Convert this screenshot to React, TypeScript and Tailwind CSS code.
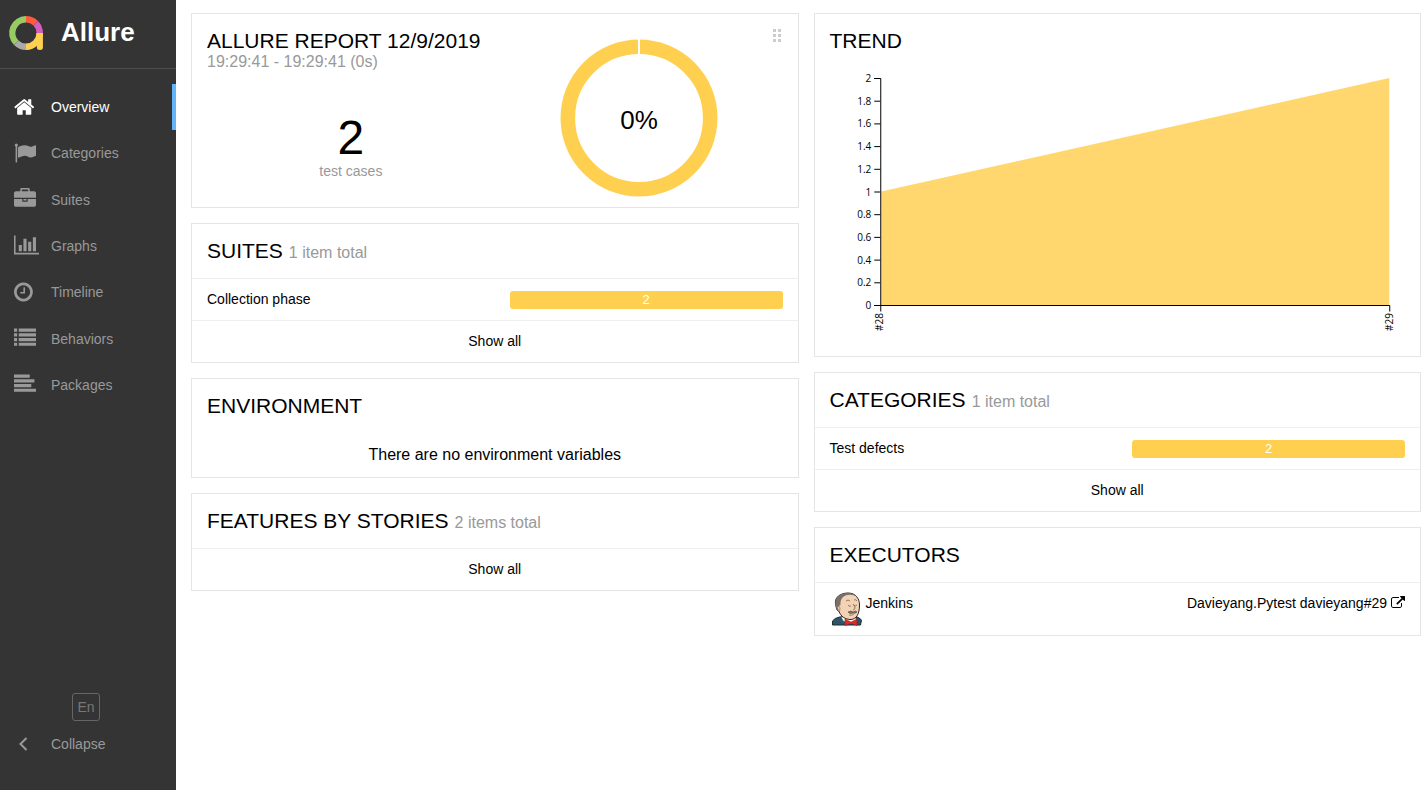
import { useState } from "react";
import type { ReactNode } from "react";

const navItems = [
    { label: "Overview", box: "64 0 1664 1792", icon: <path d="M1472 992v480q0 26-19 45t-45 19h-384v-384h-256v384h-384q-26 0-45-19t-19-45v-480q0-1 .5-3t.5-3l575-474 575 474q1 2 1 6zm223-69l-62 74q-8 9-21 11h-3q-13 0-21-7l-692-577-692 577q-12 8-24 7-13-2-21-11l-62-74q-8-10-7-23.5t11-21.5l719-599q32-26 76-26t76 26l244 204v-195q0-14 9-23t23-9h192q14 0 23 9t9 23v408l219 182q10 8 11 21.5t-7 23.5z" /> },
    { label: "Categories", box: "0 0 1792 1792", icon: <path d="M320 256q0 72-64 110v1266q0 13-9.5 22.5t-22.5 9.5h-64q-13 0-22.5-9.5t-9.5-22.5v-1266q-64-38-64-110 0-53 37.5-90.5t90.5-37.5 90.5 37.5 37.5 90.5zm1472 64v763q0 25-12.5 38.5t-39.5 27.5q-215 116-369 116-61 0-123.5-22t-108.5-48-115.5-48-142.5-22q-192 0-464 146-17 9-33 9-26 0-45-19t-19-45v-742q0-32 31-55 21-14 79-43 236-120 421-120 107 0 200 29t219 88q38 19 88 19 54 0 117.5-21t110-47 88-47 54.5-21q26 0 45 19t19 45z" /> },
    { label: "Suites", box: "0 0 1792 1792", icon: <path d="M640 256h512v-128h-512v128zm1152 640v480q0 66-47 113t-113 47h-1472q-66 0-113-47t-47-113v-480h672v160q0 26 19 45t45 19h320q26 0 45-19t19-45v-160h672zm-768 0v128h-256v-128h256zm768-480v384h-1792v-384q0-66 47-113t113-47h352v-160q0-40 28-68t68-28h576q40 0 68 28t28 68v160h352q66 0 113 47t47 113z" /> },
    { label: "Graphs", box: "0 0 2048 1792", icon: <path d="M640 896v512h-256v-512h256zm384-512v1024h-256v-1024h256zm1024 1152v128h-2048v-1536h128v1408h1920zm-640-896v768h-256v-768h256zm384-384v1152h-256v-1152h256z" /> },
    { label: "Timeline", box: "128 0 1536 1792", icon: <path d="M1024 544v448q0 14-9 23t-23 9h-320q-14 0-23-9t-9-23v-64q0-14 9-23t23-9h224v-352q0-14 9-23t23-9h64q14 0 23 9t9 23zm416 352q0-148-73-273t-198-198-273-73-273 73-198 198-73 273 73 273 198 198 273 73 273-73 198-198 73-273zm224 0q0 209-103 385.5t-279.5 279.5-385.5 103-385.5-103-279.5-279.5-103-385.5 103-385.5 279.5-279.5 385.5-103 385.5 103 279.5 279.5 103 385.5z" /> },
    { label: "Behaviors", box: "0 0 1792 1792", icon: <path d="M0 128h256v256H0zM384 128h1408v256H384zM0 512h256v256H0zM384 512h1408v256H384zM0 896h256v256H0zM384 896h1408v256H384zM0 1280h256v256H0zM384 1280h1408v256H384z" /> },
    { label: "Packages", box: "0 0 1792 1792", icon: <path d="M0 128h1280v256H0zM0 512h1664v256H0zM0 896h1408v256H0zM0 1280h1792v256H0z" /> },
];

const ticks = ["0", "0.2", "0.4", "0.6", "0.8", "1", "1.2", "1.4", "1.6", "1.8", "2"];

function Logo() {
    return (
        <svg className="h-9 w-9" viewBox="0 0 36 36" fill="none" strokeWidth="6.4">
            <path d="M8.300 27.700A13.700 13.700 0 0 1 18 4.300" stroke="#97cc64" />
            <path d="M18 4.300A13.700 13.700 0 0 1 27.700 8.300" stroke="#fd5a3e" />
            <path d="M27.700 8.300A13.700 13.700 0 0 1 31.700 18" stroke="#d35ebe" />
            <path d="M18 31.700A13.700 13.700 0 0 1 8.300 27.700" stroke="#aaa" />
            <path d="M31.700 18A13.700 13.700 0 0 1 18 31.700" stroke="#ffd050" />
            <path d="M28.500 18H34.900V32.500q0 2.500-3 2.500t-3-2.500V24z" fill="#ffd050" />
        </svg>
    );
}

function Widget({ children }: { children: ReactNode }) {
    return <section className="border border-[#e5e5e5] bg-white">{children}</section>;
}

function Title({ children, note }: { children: ReactNode; note?: string }) {
    return (
        <h2 className="flex items-baseline gap-1.5 p-[15px] text-[21px] leading-6">
            {children}
            {note && <span className="text-base leading-4 text-[#999]">{note}</span>}
        </h2>
    );
}

function BarRow({ name, count }: { name: string; count: number }) {
    return (
        <a href="#" className="flex items-center border-t border-[#eceff1] px-[15px] py-[10px] text-sm leading-[21px]">
            <span className="flex-1">{name}</span>
            <span className="w-[273px] rounded-[3px] bg-[#ffd050] text-center text-[13px] leading-[18px] text-white">{count}</span>
        </a>
    );
}

function ShowAll() {
    return (
        <a href="#" className="block border-t border-[#eceff1] py-[10px] text-center text-sm leading-[21px]">
            Show all
        </a>
    );
}

function Donut() {
    return (
        <svg className="h-40 w-40" viewBox="0 0 160 160">
            <circle cx="80" cy="80" r="71.2" fill="none" stroke="#ffd050" strokeWidth="14.6" />
            <path d="M80 0v18" stroke="#fff" strokeWidth="2" />
            <text x="80" y="91" textAnchor="middle" fontSize="26">0%</text>
        </svg>
    );
}

function TrendChart() {
    return (
        <svg className="block h-[288px] w-full" viewBox="0 0 605 288" fontSize="10" style={{ fontFamily: '"Open Sans", sans-serif' }}>
            <path d="M66 123.500L574 10V238H66z" fill="#ffd76e" />
            <path d="M59 10.500h6.500V238M59 237.500h515.500v6M65.500 237.500v6" fill="none" stroke="#000" />
            {ticks.map((t, i) => (
                <g key={t}>
                    <path d={`M59 ${237.5 - i * 22.7}h6`} stroke="#000" />
                    <text x="56" y={241 - i * 22.7} textAnchor="end">{t}</text>
                </g>
            ))}
            <text transform="translate(68 245) rotate(-90)" textAnchor="end">#28</text>
            <text transform="translate(578 245) rotate(-90)" textAnchor="end">#29</text>
        </svg>
    );
}

function JenkinsIcon() {
    return (
        <svg className="h-[34px] w-[30px]" viewBox="0 0 30 34">
            <path d="M.5 33V29q2-3 7-4l14-1q6 1 8 4l-1 5z" fill="#2d5468" stroke="#1d2b33" />
            <path d="M9 25l2 4 7 3 7-3-2-5z" fill="#fff" stroke="#444" strokeWidth=".6" />
            <path d="M4 14C1 5 9 1 16 1c8 0 11.500 6 11.500 12 0 9-3 14-8.500 14.500-6 0-10-3-12-8q-3-1-3-5.500z" fill="#f3d3b4" stroke="#30231c" />
            <path d="M4 16C1 6 8 1 16 1q5 0 8 3-8-3-13 1-3 3-2.500 8l-2 1 .5 5q-3-1-3-3z" fill="#77706b" />
            <path d="M5.500 15q2-2 2.500 1l-.5 4" fill="#f3d3b4" stroke="#7c6149" strokeWidth=".6" />
            <path d="M14 9q2-2 4 0M22 8q2-1 3 1M16 13q1 2 3 1M22 13q1 2 3 0M21 12q4 5 0 6" fill="none" stroke="#685144" strokeWidth=".7" />
            <path d="M16 20q3-2 5 0 3-2 4 0-2 2-4 1-3 2-5-1z" fill="#81786f" stroke="#493b31" strokeWidth=".5" />
            <path d="M17 23q3 1 5-1" fill="none" stroke="#6b4637" strokeWidth=".6" />
            <path d="M13 27l6 3 6-3v6.500l-6-2-6 2z" fill="#e32b25" stroke="#811c1c" strokeWidth=".5" />
        </svg>
    );
}

export default function App() {
    const [active, setActive] = useState("Overview");

    return (
        <div className="flex min-h-screen bg-white text-black" style={{ fontFamily: '"Liberation Sans", Arial, sans-serif' }}>
            <aside className="flex w-44 shrink-0 flex-col bg-[#343434] text-sm text-[#999]">
                <div className="flex h-[69px] items-center gap-[17px] border-b border-[#4d4d4d] pb-[2px] pl-2 text-[26px] font-bold text-white">
                    <Logo />
                    <span>Allure</span>
                </div>
                <nav className="mt-[15px] grid h-[324px] grid-rows-7">
                    {navItems.map((item) => (
                        <a
                            key={item.label}
                            href="#"
                            onClick={() => setActive(item.label)}
                            className={`flex items-center border-r-4 pl-[14px] ${active === item.label ? "border-[#63b4f7] text-white" : "border-transparent"}`}
                        >
                            <span className="w-[37px] pb-px">
                                <svg className="h-[22px] w-auto" viewBox={item.box} fill="currentColor">{item.icon}</svg>
                            </span>
                            {item.label}
                        </a>
                    ))}
                </nav>
                <div className="mt-auto pb-9">
                    <button className="ml-[72px] block h-7 w-7 rounded-[3px] border border-[#666] text-sm leading-[26px] text-[#777]">En</button>
                    <button className="mt-3 flex h-[21px] items-center pl-[19px]">
                        <svg className="mr-[22px] h-[14px] w-[10px]" viewBox="0 0 10 14" fill="none" stroke="currentColor" strokeWidth="2">
                            <path d="M7.500 1L1.500 7l6 6" />
                        </svg>
                        Collapse
                    </button>
                </div>
            </aside>

            <main className="grid flex-1 grid-cols-2 items-start gap-[15px] pt-[13px] pr-[7px] pb-[15px] pl-[15px]">
                <div className="flex flex-col gap-[15px]">
                    <Widget>
                        <div className="relative grid grid-cols-2 px-[15px] pt-[15px]">
                            <div>
                                <h2 className="text-[21px] leading-6 whitespace-nowrap">ALLURE REPORT 12/9/2019</h2>
                                <p className="text-base leading-[18px] text-[#999]">19:29:41 - 19:29:41 (0s)</p>
                                <div className="mt-[42px] text-center">
                                    <div className="text-[48px] leading-[50px]">2</div>
                                    <div className="text-sm leading-4 text-[#999]">test cases</div>
                                </div>
                            </div>
                            <div className="flex justify-center py-[9px]">
                                <Donut />
                            </div>
                            <svg className="absolute top-[15px] right-[17px] h-[13px] w-2 text-[#ccc]" viewBox="0 0 8 13" fill="currentColor">
                                <path d="M0 0h3v3H0zM5 0h3v3H5zM0 5h3v3H0zM5 5h3v3H5zM0 10h3v3H0zM5 10h3v3H5z" />
                            </svg>
                        </div>
                    </Widget>
                    <Widget>
                        <Title note="1 item total">SUITES</Title>
                        <BarRow name="Collection phase" count={2} />
                        <ShowAll />
                    </Widget>
                    <Widget>
                        <Title>ENVIRONMENT</Title>
                        <p className="py-[10px] text-center text-base leading-6">There are no environment variables</p>
                    </Widget>
                    <Widget>
                        <Title note="2 items total">FEATURES BY STORIES</Title>
                        <ShowAll />
                    </Widget>
                </div>

                <div className="flex flex-col gap-[15px]">
                    <Widget>
                        <Title>TREND</Title>
                        <TrendChart />
                    </Widget>
                    <Widget>
                        <Title note="1 item total">CATEGORIES</Title>
                        <BarRow name="Test defects" count={2} />
                        <ShowAll />
                    </Widget>
                    <Widget>
                        <Title>EXECUTORS</Title>
                        <div className="flex border-t border-[#eceff1] px-[15px] py-[9px] text-sm leading-[22px]">
                            <div className="flex flex-1 gap-1 pl-[2px]">
                                <JenkinsIcon />
                                <span>Jenkins</span>
                            </div>
                            <a href="#" className="flex gap-1">
                                Davieyang.Pytest davieyang#29
                                <svg className="mt-1 h-[14px] w-[14px]" viewBox="0 0 1792 1792" fill="currentColor">
                                    <path d="M1408 928v320q0 119-84.5 203.5t-203.5 84.5h-832q-119 0-203.5-84.5t-84.5-203.5v-832q0-119 84.5-203.5t203.5-84.5h704q14 0 23 9t9 23v64q0 14-9 23t-23 9h-704q-66 0-113 47t-47 113v832q0 66 47 113t113 47h832q66 0 113-47t47-113v-320q0-14 9-23t23-9h64q14 0 23 9t9 23zm384-864v512q0 26-19 45t-45 19-45-19l-176-176-652 652q-10 10-23 10t-23-10l-114-114q-10-10-10-23t10-23l652-652-176-176q-19-19-19-45t19-45 45-19h512q26 0 45 19t19 45z" />
                                </svg>
                            </a>
                        </div>
                    </Widget>
                </div>
            </main>
        </div>
    );
}
